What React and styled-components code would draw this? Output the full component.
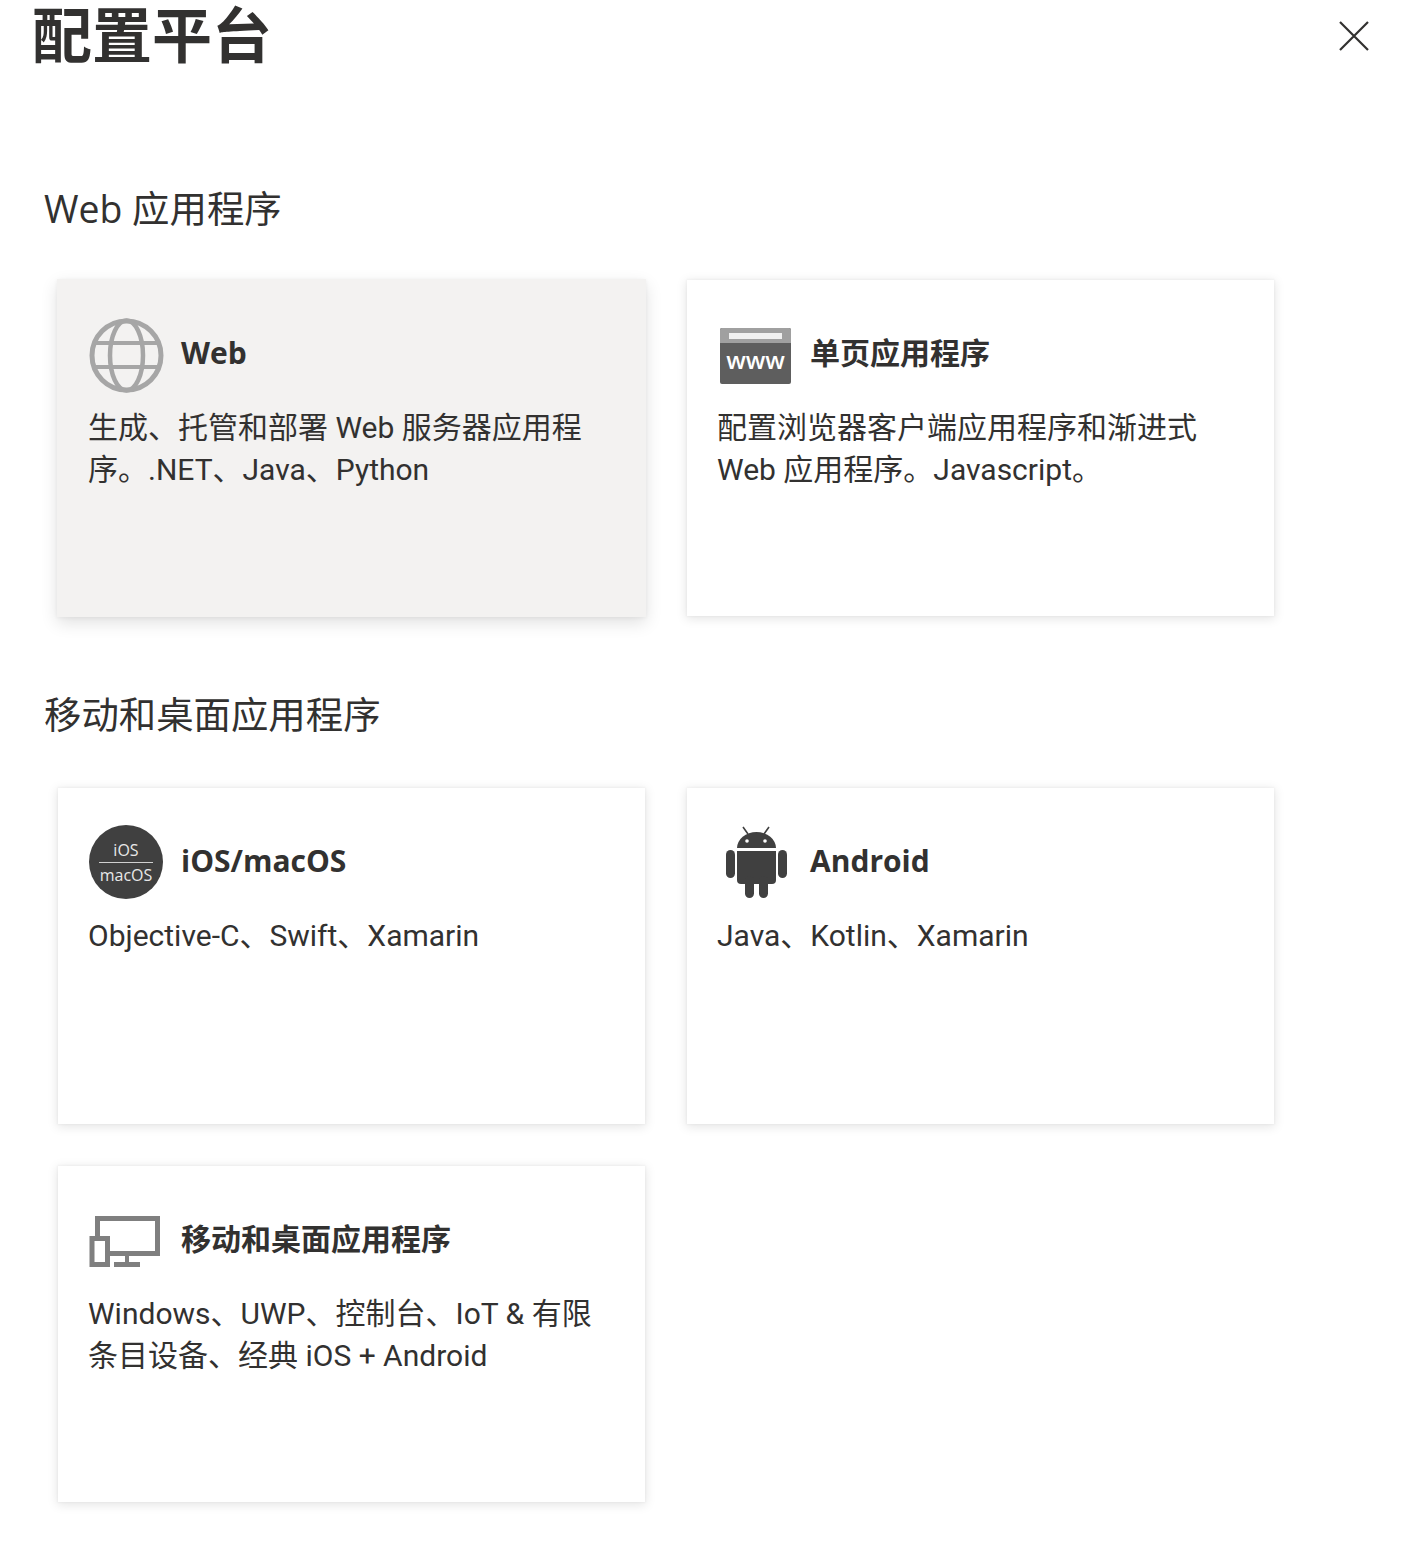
import React from "react";
import styled, { createGlobalStyle } from "styled-components";

const HEAD_FONT = '"Open Sans", "Noto Sans CJK SC", sans-serif';
const BODY_FONT = 'Roboto, "Noto Sans CJK SC", sans-serif';

const GlobalStyle = createGlobalStyle`
    html, body {
        margin: 0;
        padding: 0;
        background: #ffffff;
    }
    body {
        font-family: ${BODY_FONT};
        color: #323130;
    }
`;

const Page = styled.div`
    width: 1421px;
    height: 1542px;
    overflow: hidden;
`;

const Header = styled.header`
    display: flex;
    justify-content: space-between;
    align-items: flex-start;
    height: 72px;
    padding-left: 32px;
    padding-right: 51px;
`;

const Title = styled.h1`
    margin: 0;
    padding-top: 3px;
    font-family: "Liberation Sans", "Noto Sans CJK SC", sans-serif;
    font-size: 60px;
    line-height: 69px;
    font-weight: 700;
    color: #323130;
`;

const CloseButton = styled.button`
    border: 0;
    background: none;
    padding: 0;
    margin-top: 20px;
    width: 32px;
    height: 32px;
    display: block;
`;

const Section = styled.section`
    padding-left: 44px;
`;

const SectionTitle = styled.h2`
    margin: 0;
    font-family: ${HEAD_FONT};
    font-size: 37.4px;
    line-height: 50px;
    font-weight: 400;
    color: #323130;
    padding-top: ${(p) => p.$top}px;
    padding-bottom: ${(p) => p.$bottom}px;
`;

const Grid = styled.div`
    display: grid;
    grid-template-columns: 589px 589px;
    gap: 40px;
    margin-left: 13px;
`;

const Card = styled.div`
    box-sizing: border-box;
    height: 338px;
    padding: 38px 31px 0;
    border: 1px solid transparent;
    background: ${(p) => (p.$active ? "#f3f2f1" : "#ffffff")};
    background-clip: ${(p) => (p.$active ? "border-box" : "padding-box")};
    box-shadow: ${(p) =>
        p.$active
            ? "0 6px 16px rgba(0, 0, 0, 0.12), 0 1px 4px rgba(0, 0, 0, 0.05)"
            : "0 2px 10px rgba(0, 0, 0, 0.1), 0 0 2px rgba(0, 0, 0, 0.03)"};
`;

const CardHead = styled.div`
    display: flex;
    align-items: center;
    gap: 17px;
    height: 75px;
`;

const IconBox = styled.div`
    width: 75px;
    height: 75px;
    flex: none;
    display: flex;
    align-items: center;
    justify-content: center;
`;

const CardTitle = styled.h3`
    margin: 0 0 6px;
    font-family: ${HEAD_FONT};
    font-size: 30px;
    line-height: 40px;
    font-weight: 700;
    color: #323130;
`;

const CardText = styled.p`
    margin: 14px 0 0 -1px;
    font-size: 30px;
    line-height: 42px;
    font-weight: 400;
    color: #323130;
`;

const IosBadge = styled.div`
    width: 74px;
    height: 74px;
    margin: 0 1px 3px 0;
    border-radius: 50%;
    background: #404040;
    color: #e8e8e8;
    font-size: 16px;
    line-height: 22px;
    display: flex;
    flex-direction: column;
    align-items: center;
    justify-content: center;
    font-family: "Open Sans", sans-serif;
`;

const IosTop = styled.span`
    display: block;
    width: 54px;
    text-align: center;
    border-bottom: 1px solid #d0d0d0;
    padding-bottom: 1px;
    margin-bottom: 1px;
`;

const GlobeIcon = () => (
    <svg width="75" height="75" viewBox="0 0 75 75" fill="none" stroke="#a6a6a6">
        <circle cx="37.5" cy="37.5" r="34.500" strokeWidth="5" />
        <ellipse cx="37.5" cy="37.5" rx="16.5" ry="35" strokeWidth="4.5" />
        <path d="M6 25h63M6 49h63" strokeWidth="4" />
    </svg>
);

const WwwIcon = () => (
    <svg width="71" height="56" viewBox="0 0 71 56">
        <rect x="0" y="0" width="71" height="56" rx="2" fill="#5e5e5e" />
        <path d="M0 15V2a2 2 0 0 1 2-2h67a2 2 0 0 1 2 2v13z" fill="#a0a0a0" />
        <rect x="9" y="5" width="53" height="6" fill="#f0f0f0" />
        <text x="35.5" y="41" textAnchor="middle" fontFamily="Open Sans, sans-serif" fontSize="24" fontWeight="600" fill="#ffffff">www</text>
    </svg>
);

const AndroidIcon = () => (
    <svg width="75" height="75" viewBox="0 0 75 75" fill="#404040">
        <path d="M19 22a19.500 16 0 0 1 39 0z" />
        <path d="M25 1l5 7M51 1l-5 7" stroke="#404040" strokeWidth="1.6" />
        <circle cx="29" cy="15" r="1.8" fill="#fff" />
        <circle cx="47" cy="15" r="1.8" fill="#fff" />
        <path d="M19 25h39v29a4 4 0 0 1-4 4H23a4 4 0 0 1-4-4z" />
        <rect x="8" y="24" width="9" height="28" rx="4.5" />
        <rect x="60" y="24" width="9" height="28" rx="4.5" />
        <rect x="27" y="50" width="9" height="22" rx="4.5" />
        <rect x="41" y="50" width="9" height="22" rx="4.5" />
    </svg>
);

const DeviceIcon = () => (
    <svg width="75" height="51" viewBox="0 0 75 51" fill="none" stroke="#7f7f7f" strokeWidth="5">
        <path d="M8.500 20V2.500h60v35H21" />
        <rect x="3" y="22.500" width="15.500" height="26" />
        <path d="M38 40v6" strokeWidth="4" />
        <path d="M25 48.500h26" strokeWidth="5" />
    </svg>
);

const CloseIcon = () => (
    <svg width="32" height="32" viewBox="0 0 32 32" fill="none" stroke="#323130" strokeWidth="2.2">
        <path d="M2 2l28 28M30 2L2 30" />
    </svg>
);

const webCards = [
    {
        title: "Web",
        text: "生成、托管和部署 Web 服务器应用程序。.NET、Java、Python",
        icon: <GlobeIcon />,
        active: true,
    },
    {
        title: "单页应用程序",
        text: "配置浏览器客户端应用程序和渐进式 Web 应用程序。Javascript。",
        icon: <WwwIcon />,
    },
];

const nativeCards = [
    {
        title: "iOS/macOS",
        text: "Objective-C、Swift、Xamarin",
        icon: (
            <IosBadge>
                <IosTop>iOS</IosTop>
                <span>macOS</span>
            </IosBadge>
        ),
    },
    {
        title: "Android",
        text: "Java、Kotlin、Xamarin",
        icon: <AndroidIcon />,
    },
    {
        title: "移动和桌面应用程序",
        text: "Windows、UWP、控制台、IoT & 有限条目设备、经典 iOS + Android",
        icon: <DeviceIcon />,
    },
];

function PlatformCard({ card }) {
    return (
        <Card $active={card.active}>
            <CardHead>
                <IconBox>{card.icon}</IconBox>
                <CardTitle>{card.title}</CardTitle>
            </CardHead>
            <CardText>{card.text}</CardText>
        </Card>
    );
}

export default function App() {
    return (
        <Page>
            <GlobalStyle />
            <Header>
                <Title>配置平台</Title>
                <CloseButton aria-label="关闭">
                    <CloseIcon />
                </CloseButton>
            </Header>
            <Section>
                <SectionTitle $top={112} $bottom={45}>Web 应用程序</SectionTitle>
                <Grid>
                    {webCards.map((card) => (
                        <PlatformCard key={card.title} card={card} />
                    ))}
                </Grid>
            </Section>
            <Section>
                <SectionTitle $top={73} $bottom={47}>移动和桌面应用程序</SectionTitle>
                <Grid>
                    {nativeCards.map((card) => (
                        <PlatformCard key={card.title} card={card} />
                    ))}
                </Grid>
            </Section>
        </Page>
    );
}
